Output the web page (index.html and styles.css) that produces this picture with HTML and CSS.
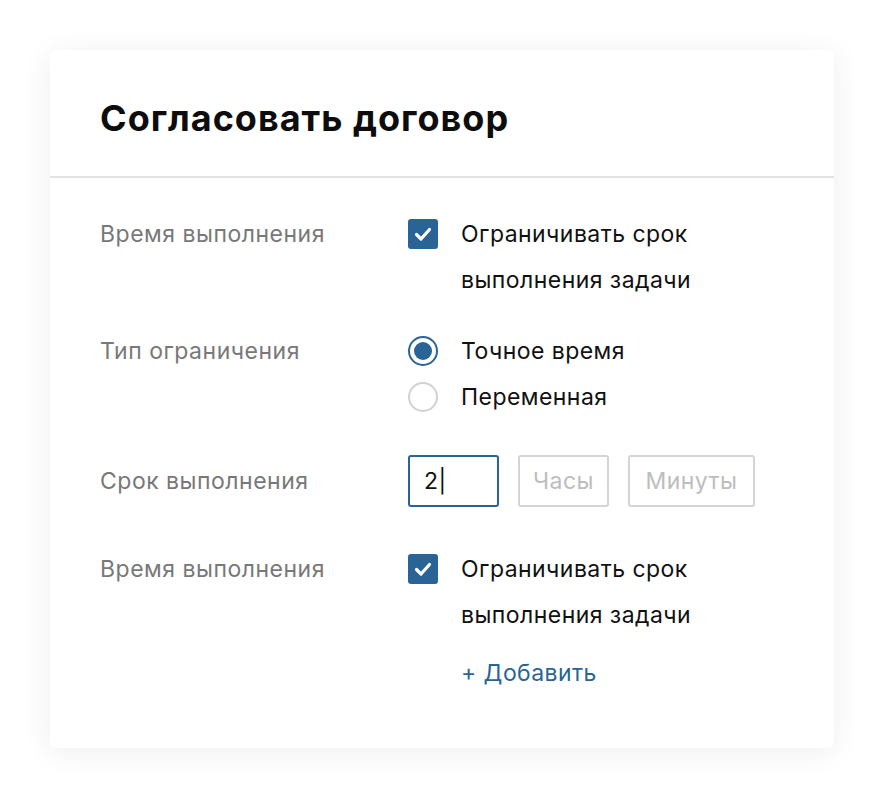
FILE: index.html
```html
<!DOCTYPE html>
<html lang="ru">
<head>
<meta charset="utf-8">
<link rel="stylesheet" href="styles.css">
</head>
<body>
<div class="card">
  <div class="card-header">
    <h1 class="title">Согласовать договор</h1>
  </div>
  <div class="card-body">
    <div class="row row-1">
      <div class="label">Время выполнения</div>
      <div class="control">
        <div class="option">
          <span class="checkbox"><svg viewBox="0 0 30 30" width="30" height="30"><path d="M8.5 15.5 L13 20 L21.5 10.5" fill="none" stroke="#fff" stroke-width="3.2" stroke-linecap="round" stroke-linejoin="round"/></svg></span>
          <span class="option-text">Ограничивать срок<br>выполнения задачи</span>
        </div>
      </div>
    </div>
    <div class="row row-2">
      <div class="label">Тип ограничения</div>
      <div class="control">
        <div class="option">
          <span class="radio checked"></span>
          <span class="option-text">Точное время</span>
        </div>
        <div class="option">
          <span class="radio"></span>
          <span class="option-text">Переменная</span>
        </div>
      </div>
    </div>
    <div class="row row-3">
      <div class="label">Срок выполнения</div>
      <div class="control inputs">
        <div class="input active">2|</div>
        <div class="input placeholder w-hours">Часы</div>
        <div class="input placeholder w-minutes">Минуты</div>
      </div>
    </div>
    <div class="row row-4">
      <div class="label">Время выполнения</div>
      <div class="control">
        <div class="option">
          <span class="checkbox"><svg viewBox="0 0 30 30" width="30" height="30"><path d="M8.5 15.5 L13 20 L21.5 10.5" fill="none" stroke="#fff" stroke-width="3.2" stroke-linecap="round" stroke-linejoin="round"/></svg></span>
          <span class="option-text">Ограничивать срок<br>выполнения задачи</span>
        </div>
        <div class="add">+ Добавить</div>
      </div>
    </div>
  </div>
</div>
</body>
</html>
```

FILE: styles.css
```css
* { box-sizing: border-box; }
html, body { margin: 0; background: #ffffff; }
body {
  padding: 50px 48px 48px 50px;
  font-family: Inter, "Noto Sans", "Liberation Sans", sans-serif;
  color: #111;
}
.card {
  width: 784px;
  background: #fff;
  border-radius: 6px;
  box-shadow: 0 4px 30px rgba(0,0,0,0.07);
}
.card-header {
  height: 128px;
  border-bottom: 2px solid #e3e3e3;
  padding: 0 50px;
  display: flex;
  align-items: center;
}
.title {
  margin: 0;
  font-size: 36px;
  font-weight: 700;
  letter-spacing: 1px;
  color: #0d0d0d;
  padding-top: 10px;
}
.card-body {
  padding: 33px 50px 52px 50px;
}
.row {
  display: flex;
  align-items: flex-start;
}
.row-2 { margin-top: 25px; }
.row-3 { margin-top: 35px; }
.row-4 { margin-top: 39px; }
.label {
  width: 308px;
  flex: none;
  font-size: 23px;
  letter-spacing: 0.5px;
  line-height: 46px;
  color: #787878;
}
.row-3 .label { line-height: 52px; }
.control { flex: 1; }
.option {
  display: flex;
  align-items: flex-start;
}
.option-text {
  font-size: 23px;
  letter-spacing: 0.45px;
  line-height: 46px;
  color: #111;
}
.checkbox {
  width: 30px;
  height: 30px;
  flex: none;
  border-radius: 3px;
  background: #2a6496;
  margin: 8px 23px 0 0;
  display: block;
}
.checkbox svg { display: block; }
.radio {
  width: 30px;
  height: 30px;
  flex: none;
  border-radius: 50%;
  border: 2px solid #d2d2d2;
  margin: 8px 23px 0 0;
  display: flex;
  align-items: center;
  justify-content: center;
}
.radio.checked { border-color: #2a6496; }
.radio.checked::after {
  content: "";
  width: 18px;
  height: 18px;
  border-radius: 50%;
  background: #2a6496;
}
.inputs {
  display: flex;
  gap: 19px;
}
.input {
  height: 52px;
  width: 91px;
  border: 2px solid #d4d4d4;
  border-radius: 3px;
  font-size: 23px;
  letter-spacing: 0.45px;
  line-height: 48px;
  padding: 0 14px;
  color: #111;
}
.input.active { border-color: #2a6496; }
.input.placeholder { color: #bdbdbd; text-align: center; padding: 0; }
.w-minutes { width: 127px; }
.add {
  margin: 12px 0 0 53px;
  font-size: 23px;
  letter-spacing: 0.45px;
  line-height: 46px;
  color: #2a6496;
}
```
